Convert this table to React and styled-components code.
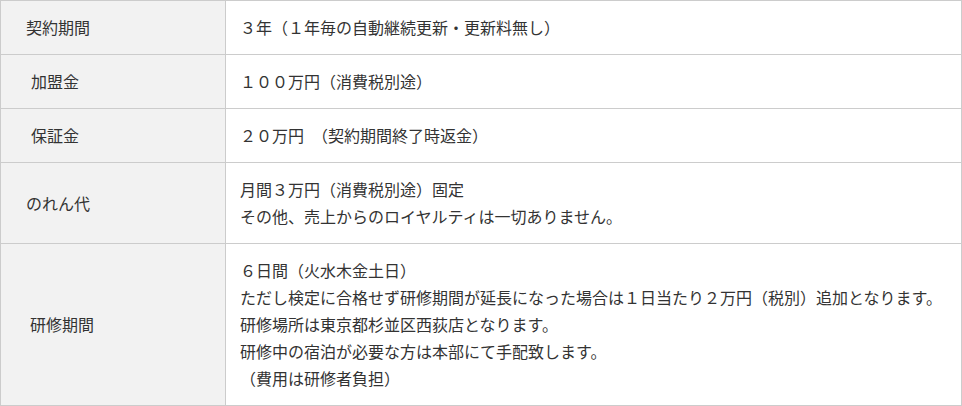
import React from 'react';
import styled, { createGlobalStyle } from 'styled-components';

const GlobalStyle = createGlobalStyle`
  html, body {
    margin: 0;
    padding: 0;
    background: #fff;
  }
  body {
    font-family: "Noto Sans CJK JP", "Noto Sans", sans-serif;
    color: #333;
  }
`;

const InfoTable = styled.div`
  width: 962px;
  box-sizing: border-box;
  border: 1px solid #ccc;
`;

const Row = styled.div`
  display: grid;
  grid-template-columns: 225px 1fr;

  & + & {
    border-top: 1px solid #ccc;
  }
`;

const Label = styled.div`
  display: flex;
  align-items: center;
  background: #f2f2f2;
  border-right: 1px solid #ccc;
  padding: 13px 0 13px ${({ indent }) => 25 + (indent || 0)}px;
  font-size: 16px;
  line-height: 27px;
`;

const Value = styled.div`
  padding: 13px 14px;
  font-size: 16px;
  line-height: 27px;
`;

const Line = styled.p`
  margin: 0;
  white-space: nowrap;
`;

const rows = [
  { label: '契約期間', lines: ['３年（１年毎の自動継続更新・更新料無し）'] },
  { label: '加盟金', indent: 5, lines: ['１００万円（消費税別途）'] },
  { label: '保証金', indent: 5, lines: ['２０万円\u3000（契約期間終了時返金）'] },
  {
    label: 'のれん代',
    lines: ['月間３万円（消費税別途）固定', 'その他、売上からのロイヤルティは一切ありません。'],
  },
  {
    label: '研修期間',
    indent: 4,
    lines: [
      '６日間（火水木金土日）',
      'ただし検定に合格せず研修期間が延長になった場合は１日当たり２万円（税別）追加となります。',
      '研修場所は東京都杉並区西荻店となります。',
      '研修中の宿泊が必要な方は本部にて手配致します。',
      '（費用は研修者負担）',
    ],
  },
];

const App = () => {
  return (
    <>
      <GlobalStyle />
      <InfoTable>
        {rows.map((row) => (
          <Row key={row.label}>
            <Label indent={row.indent}>{row.label}</Label>
            <Value>
              {row.lines.map((line, i) => (
                <Line key={i}>{line}</Line>
              ))}
            </Value>
          </Row>
        ))}
      </InfoTable>
    </>
  );
};

export default App;
